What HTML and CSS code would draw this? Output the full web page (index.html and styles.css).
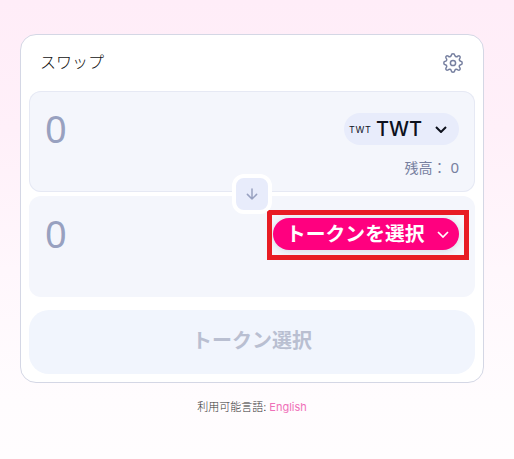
FILE: index.html
```html
<!DOCTYPE html>
<html lang="ja">
<head>
<meta charset="utf-8">
<title>スワップ</title>
<link rel="stylesheet" href="styles.css">
</head>
<body>
<main class="card">
  <header class="card-header">
    <h1 class="title">スワップ</h1>
    <svg class="gear" viewBox="0 0 20 20" width="20" height="20" fill="none" stroke="currentColor" stroke-width="1.5" stroke-linejoin="round">
      <circle cx="10" cy="10" r="2.6"/>
      <path d="M8.3 2.2Q8.4.8 10 .8T11.7 2.2Q11.9 3.4 12.9 3.7T14.8 3.1Q16 2.4 16.8 3.2T16.9 5.2Q16 6.3 16.4 7.1T17.8 8.3Q19.2 8.5 19.2 10T17.8 11.7Q16.7 11.9 16.3 12.9T16.9 14.8Q17.6 16 16.8 16.8T14.8 16.9Q13.8 16 12.9 16.3T11.7 17.8Q11.5 19.2 10 19.2T8.3 17.8Q8.1 16.6 7.1 16.3T5.2 16.9Q4 17.6 3.2 16.8T3.1 14.8Q4 13.8 3.7 12.9T2.2 11.7Q.8 11.5.8 10T2.2 8.3Q3.4 8.1 3.7 7.1T3.1 5.2Q2.4 4 3.2 3.2T5.2 3.1Q6.2 4 7.1 3.7T8.3 2.2Z"/>
    </svg>
  </header>
  <section class="panel panel-outlined">
    <div class="row">
      <span class="amount">0</span>
      <button class="token">
        <span class="token-logo">TWT</span>
        <span class="token-name">TWT</span>
        <svg class="chevron" width="12" height="7" viewBox="0 0 12 7" fill="none" stroke="currentColor" stroke-width="2"><path d="M1 1l5 5 5-5"/></svg>
      </button>
    </div>
    <div class="balance"><span>残高：</span><span class="balance-value">0</span></div>
    <button class="switch" aria-label="切り替え">
      <svg width="12" height="12" viewBox="0 0 12 12" fill="none" stroke="currentColor" stroke-width="1.5" stroke-linecap="round" stroke-linejoin="round"><path d="M6 1v10M1.4 6.4L6 11l4.6-4.6"/></svg>
    </button>
  </section>
  <section class="panel panel-second">
    <div class="row">
      <span class="amount">0</span>
      <button class="token token-select">
        <span class="select-label">トークンを選択</span>
        <svg class="chevron" width="12" height="7" viewBox="0 0 12 7" fill="none" stroke="currentColor" stroke-width="1.7"><path d="M1 1l5 5 5-5"/></svg>
        <span class="highlight"></span>
      </button>
    </div>
  </section>
  <button class="submit">トークン選択</button>
</main>
<footer class="languages">利用可能言語: <a class="language">English</a></footer>
</body>
</html>
```

FILE: styles.css
```css
* { box-sizing: border-box; }

body {
  margin: 0;
  padding: 34px 30px 0 20px;
  height: 459px;
  overflow: hidden;
  font-family: Inter, "Noto Sans CJK JP", sans-serif;
  background: linear-gradient(180deg, #ffedf8 0, #fff0f9 130px, #fff7fc 270px, #fffcfe 400px, #fffdfe 459px);
}

button {
  border: 0;
  padding: 0;
  font-family: inherit;
}

svg { display: block; flex: none; }

.card {
  width: 464px;
  height: 349px;
  padding: 8px;
  border: 1px solid #d4d7e5;
  border-radius: 16px;
  background: #fff;
}

.card-header {
  display: flex;
  justify-content: space-between;
  align-items: center;
  height: 48px;
  padding: 0 12px 10px 11px;
}

.title {
  margin: 0;
  font-size: 16px;
  font-weight: 300;
  line-height: 24px;
  color: #111;
}

.gear { color: #7780a0; margin-top: 1px; }

.panel {
  position: relative;
  height: 101px;
  padding: 22px 16px 0;
  border-radius: 12px;
  background: #f4f6fc;
}

.panel-outlined { box-shadow: inset 0 0 0 1px #e6e9f4; }

.panel-second { margin-top: 4px; }

.row {
  display: flex;
  align-items: center;
  justify-content: space-between;
  height: 32px;
}

.amount {
  padding-bottom: 3px;
  font-family: "Noto Sans", sans-serif;
  font-size: 38px;
  line-height: 32px;
  color: #98a1c0;
}

.token {
  position: relative;
  display: flex;
  align-items: center;
  width: 115px;
  height: 32px;
  padding-left: 5px;
  border-radius: 16px;
  background: #e8ecfb;
  color: #0d111c;
}

.token-logo {
  width: 27px;
  font-size: 9px;
  letter-spacing: 0.6px;
  text-align: left;
}

.token-name {
  width: 59px;
  font-size: 20px;
  font-weight: 500;
  text-align: left;
}

.balance {
  display: flex;
  justify-content: flex-end;
  margin-top: 13px;
  font-size: 14px;
  line-height: 20px;
  color: #7780a0;
}

.balance-value {
  margin: -1px 0 0 4px;
  font-family: "Noto Sans", sans-serif;
  font-size: 15px;
}

.switch {
  position: absolute;
  z-index: 1;
  left: 203px;
  top: 83px;
  display: grid;
  place-items: center;
  width: 40px;
  height: 40px;
  border: 4px solid #fff;
  border-radius: 12px;
  background: #e8ecfb;
  color: #98a1c0;
}

.token-select {
  width: 186px;
  padding-left: 13px;
  background: #ff007f;
  color: #fff;
  box-shadow: 0 1px 7px rgba(70, 70, 90, 0.16);
}

.select-label {
  width: 151px;
  font-size: 19.8px;
  font-weight: 700;
  line-height: 30px;
  text-align: left;
}

.highlight {
  position: absolute;
  left: -6px;
  top: -8px;
  width: 202px;
  height: 50px;
  border: 5px solid #e81c24;
}

.submit {
  display: block;
  width: 100%;
  height: 64px;
  margin-top: 13px;
  padding-bottom: 5px;
  border-radius: 20px;
  background: #f1f5fd;
  color: #b9bfd1;
  font-size: 20px;
  font-weight: 600;
}

.languages {
  width: 464px;
  margin-top: 16px;
  font-size: 11px;
  font-weight: 300;
  line-height: 16px;
  text-align: center;
  color: #333;
}

.language {
  color: #ef70b8;
  font-weight: 400;
}
```
